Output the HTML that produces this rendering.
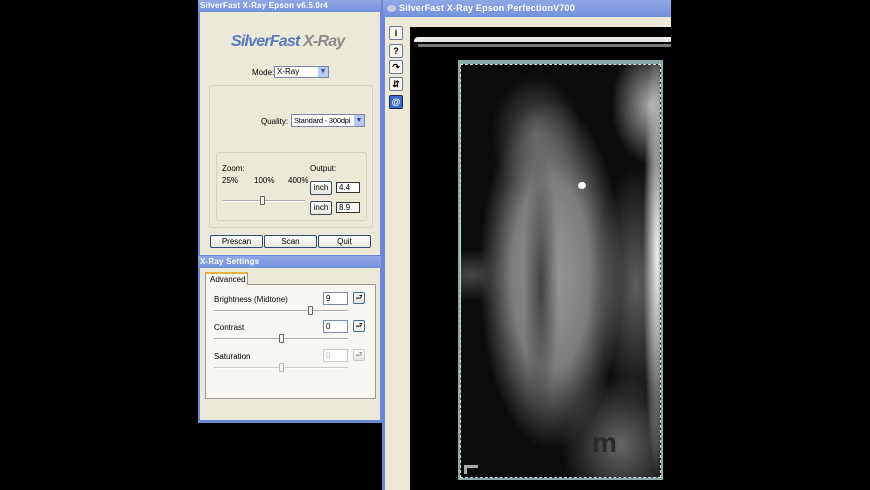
<!DOCTYPE html>
<html><head><meta charset="utf-8"><style>
*{margin:0;padding:0;box-sizing:border-box}
body{width:870px;height:490px;background:#000;position:relative;overflow:hidden;font-family:"Liberation Sans",sans-serif;font-size:8px;color:#000}
.a{position:absolute}
.tb{background:linear-gradient(#8fa8e6,#7391dc);color:#fff;font-weight:bold;font-size:8.5px;letter-spacing:.2px}
.btn{position:absolute;background:linear-gradient(#fff,#e8e6dc);border:1px solid #2c4a7a;border-radius:2px;text-align:center;font-size:8px;line-height:12px}
.inp{position:absolute;background:#fff;border:1px solid #555;font-size:8px;line-height:9px;padding-left:2px;white-space:nowrap;overflow:hidden}
.sl{position:absolute;height:2px;border-top:1px solid #aaa;border-bottom:1px solid #fff}
.th{position:absolute;width:5px;height:9px;background:#f4f4f0;border:1px solid #666;border-radius:1px}
.grp{position:absolute;border:1px solid #d6d2c0;border-radius:3px}
.tool{position:absolute;left:389px;width:14px;height:14px;background:#f6f5ee;border:1px solid #6a7a9a;border-radius:2px;font-size:9px;text-align:center;line-height:12px;font-weight:bold}
</style></head><body>

<!-- left window -->
<div class="a" style="left:198px;top:0;width:185px;height:423px;background:#6d86d6"></div>
<div class="a tb" style="left:198px;top:0;width:183px;height:12px;padding:1px 2px;font-size:8px">SilverFast X-Ray Epson v6.5.0r4</div>
<div class="a" style="left:200px;top:12px;width:180px;height:243px;background:#ece9d8"></div>
<div class="a" style="left:231px;top:33px;font-size:16px;font-weight:bold;font-style:italic;letter-spacing:-.8px;color:#5a78c0">SilverFast <span style="color:#8a8a8a">X-Ray</span></div>
<div class="a" style="left:252px;top:68px">Mode:</div>
<div class="inp" style="left:274px;top:66px;width:55px;height:12px;line-height:10px;border-color:#7a8aa8">X-Ray</div>
<div class="a" style="left:318px;top:67px;width:10px;height:10px;background:#b8c8f0;color:#2a4a9a;font-size:7px;text-align:center;line-height:10px">▼</div>
<div class="grp" style="left:209px;top:85px;width:164px;height:143px"></div>
<div class="a" style="left:261px;top:117px">Quality:</div>
<div class="inp" style="left:291px;top:114px;width:74px;height:13px;line-height:11px;border-color:#7a8aa8;font-size:7.5px;letter-spacing:-.2px">Standard - 300dpi</div>
<div class="a" style="left:354px;top:115px;width:10px;height:11px;background:#b8c8f0;color:#2a4a9a;font-size:7px;text-align:center;line-height:11px">▼</div>
<div class="grp" style="left:216px;top:152px;width:151px;height:69px"></div>
<div class="a" style="left:222px;top:164px">Zoom:</div>
<div class="a" style="left:310px;top:164px">Output:</div>
<div class="a" style="left:222px;top:176px">25%</div>
<div class="a" style="left:254px;top:176px">100%</div>
<div class="a" style="left:288px;top:176px">400%</div>
<div class="sl" style="left:223px;top:200px;width:82px"></div>
<div class="th" style="left:260px;top:196px"></div>
<div class="btn" style="left:310px;top:181px;width:22px;height:14px;border-color:#3a4a6a">inch</div>
<div class="inp" style="left:336px;top:182px;width:24px;height:11px;border-color:#333">4.4</div>
<div class="btn" style="left:310px;top:201px;width:22px;height:14px;border-color:#3a4a6a">inch</div>
<div class="inp" style="left:336px;top:202px;width:24px;height:11px;border-color:#333">8.9</div>
<div class="btn" style="left:210px;top:235px;width:53px;height:13px">Prescan</div>
<div class="btn" style="left:264px;top:235px;width:53px;height:13px">Scan</div>
<div class="btn" style="left:318px;top:235px;width:53px;height:13px">Quit</div>

<div class="a tb" style="left:198px;top:256px;width:183px;height:12px;padding:1px 2px;font-size:8px">X-Ray Settings</div>
<div class="a" style="left:200px;top:268px;width:180px;height:152px;background:#ece9d8"></div>
<div class="a" style="left:205px;top:284px;width:171px;height:115px;background:#f8f7f2;border:1px solid #999"></div>
<div class="a" style="left:205px;top:272px;width:43px;height:13px;background:#f8f7f2;border:1px solid #999;border-top:2px solid #f0b040;border-bottom:none;padding:1px 4px">Advanced</div>
<div class="a" style="left:214px;top:295px">Brightness (Midtone)</div>
<div class="inp" style="left:323px;top:292px;width:25px;height:13px;line-height:11px;border-color:#7a8aa8">9</div>
<div class="btn" style="left:353px;top:292px;width:12px;height:12px;line-height:10px;border-color:#4a6a8a">⮐</div>
<div class="sl" style="left:214px;top:310px;width:134px"></div>
<div class="th" style="left:308px;top:306px"></div>
<div class="a" style="left:214px;top:323px">Contrast</div>
<div class="inp" style="left:323px;top:320px;width:25px;height:13px;line-height:11px;border-color:#7a8aa8">0</div>
<div class="btn" style="left:353px;top:320px;width:12px;height:12px;line-height:10px;border-color:#4a6a8a">⮐</div>
<div class="sl" style="left:214px;top:338px;width:134px"></div>
<div class="th" style="left:279px;top:334px"></div>
<div class="a" style="left:214px;top:352px">Saturation</div>
<div class="inp" style="left:323px;top:349px;width:25px;height:13px;line-height:11px;border-color:#ccc;color:#bbb">0</div>
<div class="btn" style="left:353px;top:349px;width:12px;height:12px;line-height:10px;border-color:#ccc;color:#888">⮐</div>
<div class="sl" style="left:214px;top:367px;width:134px;border-top-color:#ccc"></div>
<div class="th" style="left:279px;top:363px;border-color:#bbb"></div>

<!-- right window -->
<div class="a" style="left:382px;top:0;width:289px;height:490px;background:#6d86d6"></div>
<div class="a tb" style="left:383px;top:0;width:288px;height:17px;padding:3px 16px;font-size:9px">SilverFast X-Ray Epson PerfectionV700</div>
<div class="a" style="left:387px;top:5px;width:9px;height:7px;background:#ccd;border-radius:50%"></div>
<div class="a" style="left:385px;top:17px;width:286px;height:473px;background:#ece9d8"></div>
<div class="tool" style="top:26px">i</div>
<div class="tool" style="top:44px">?</div>
<div class="tool" style="top:60px">↷</div>
<div class="tool" style="top:77px">⇵</div>
<div class="tool" style="top:95px;background:#3a6ad0;color:#fff;border-color:#224">@</div>
<div class="a" style="left:410px;top:27px;width:261px;height:463px;background:#000"></div>
<div class="a" style="left:414px;top:37px;width:257px;height:5px;background:#e8e8e8;border-radius:4px 0 0 0"></div>
<div class="a" style="left:418px;top:44px;width:253px;height:3px;background:#777"></div>
<div class="a" style="left:458px;top:60px;width:205px;height:420px;background:#8aa9a9"></div>
<div class="a" style="left:460px;top:64px;width:201px;height:414px;overflow:hidden;background:
radial-gradient(ellipse 14px 220px at 196px 190px,#f0f0f0,rgba(210,210,210,.5) 60%,transparent),
radial-gradient(ellipse 40px 60px at 190px 40px,rgba(210,210,210,.8),transparent),
radial-gradient(ellipse 40px 120px at 175px 220px,rgba(150,150,150,.6),transparent),
radial-gradient(ellipse 60px 70px at 160px 380px,rgba(140,140,140,.7),transparent),
radial-gradient(ellipse 18px 130px at 80px 220px,rgba(30,30,30,.7),transparent),
radial-gradient(ellipse 45px 60px at 75px 70px,rgba(140,140,140,.6),transparent),
radial-gradient(ellipse 72px 175px at 90px 210px,#9a9a9a,#7c7c7c 55%,rgba(60,60,60,.7) 85%,transparent),
radial-gradient(ellipse 50px 25px at 10px 210px,rgba(110,110,110,.6),transparent),
#0b0b0b;border:1px dashed #ddd"></div>
<div class="a" style="left:578px;top:182px;width:8px;height:7px;border-radius:50%;background:#fff"></div>
<div class="a" style="left:464px;top:465px;width:14px;height:9px;border-left:3px solid #aaa;border-top:3px solid #aaa"></div>
<div class="a" style="left:592px;top:428px;font-size:28px;font-weight:bold;color:#2a2a2a;line-height:30px">m</div>
</body></html>
